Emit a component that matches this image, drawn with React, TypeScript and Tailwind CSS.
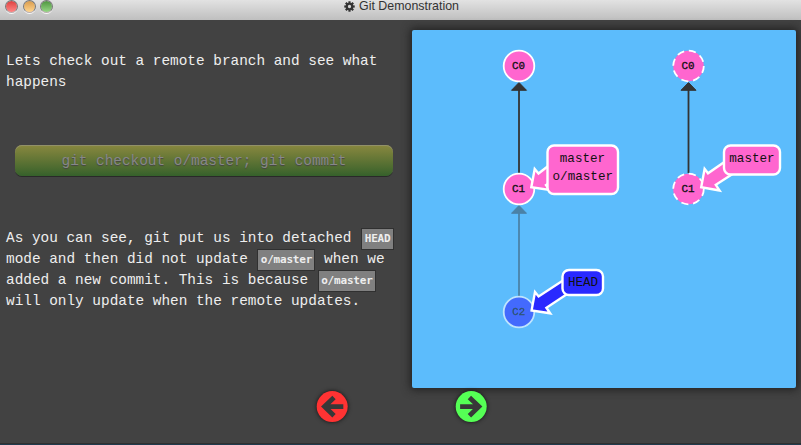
import React from "react";

const MONO = "font-['Liberation_Mono','Courier_New',monospace]";

function Code({ children, className }: { children: React.ReactNode; className: string }) {
  return (
    <code
      className={`inline-flex h-[22px] shrink-0 items-center justify-center border border-[#303030] bg-[#808080] font-['DejaVu_Sans_Mono',monospace] text-[11px] leading-none font-bold tracking-[-0.2px] text-[#eeeeee] ${className}`}
    >
      {children}
    </code>
  );
}

function Gear() {
  const teeth = [0, 45, 90, 135];
  return (
    <svg viewBox="0 0 20 20" className="h-[11px] w-[11px]">
      {teeth.map((a) => (
        <rect key={a} x="8" y="0.5" width="4" height="19" fill="#333333" transform={`rotate(${a} 10 10)`} />
      ))}
      <circle cx="10" cy="10" r="5" fill="#d4d4d4" stroke="#333333" strokeWidth="4" />
    </svg>
  );
}

function TitleBar() {
  const lights = [
    { id: "close", fill: "bg-linear-to-b from-[#dd3f3f] to-[#ff8585]" },
    { id: "minimize", fill: "bg-linear-to-b from-[#d99c4c] to-[#ffd58e]" },
    { id: "zoom", fill: "bg-linear-to-b from-[#4f963f] to-[#96d785]" },
  ];
  return (
    <header className="grid h-5 shrink-0 grid-cols-[1fr_auto_1fr] items-start bg-linear-to-b from-[#e2e2e2] to-[#bfbfbf]">
      <div className="flex gap-[4.5px] pl-[5px]">
        {lights.map((l) => (
          <span
            key={l.id}
            className={`h-[13px] w-[13px] rounded-full border-[1.5px] border-[#777777] border-b-[#bcaeae] bg-clip-padding shadow-[0_1px_0_#f8f8f8] ${l.fill}`}
          />
        ))}
      </div>
      <div className="flex h-[13px] translate-x-px items-center gap-1 font-['Liberation_Sans',Arial,sans-serif] text-[12.4px] leading-[13px] text-[#333333]">
        <Gear />
        <span>Git Demonstration</span>
      </div>
    </header>
  );
}

function Commit({ x, y, label, dashed, head }: { x: number; y: number; label: string; dashed?: boolean; head?: boolean }) {
  return (
    <g opacity={head ? 0.6 : 1}>
      <circle
        cx={x}
        cy={y}
        r="15.3"
        fill={head ? "#3434ff" : "#ff66cf"}
        stroke="#ffffff"
        strokeWidth="1.8"
        strokeDasharray={dashed ? "7.2 4.8" : undefined}
      />
      <text x={x - 0.4} y={y + 3.4} textAnchor="middle" fontSize="10.9" fill="#111111" stroke="#111111" strokeWidth="0.3">
        {label}
      </text>
    </g>
  );
}

function Edge({ x, top, bottom, faded }: { x: number; top: number; bottom: number; faded?: boolean }) {
  return (
    <g opacity={faded ? 0.42 : 1} fill="#333333" stroke="#333333">
      <path d={`M${x} ${top + 8}V${bottom}`} strokeWidth="1.8" />
      <path d={`M${x} ${top + 0.5}L${x + 7.5} ${top + 8.3}H${x - 7.5}Z`} strokeWidth="1" strokeLinejoin="round" />
    </g>
  );
}

function GitTree() {
  return (
    <svg
      width="384"
      height="358"
      viewBox="412 30 384 358"
      role="img"
      aria-label="Commit tree"
      className="block font-['Liberation_Mono','Courier_New',monospace]"
    >
      <Edge x={519} top={82} bottom={173} />
      <Edge x={519} top={205} bottom={296} faded />
      <Edge x={688.5} top={82} bottom={173} />

      <Commit x={519} y={66} label="C0" />
      <Commit x={519} y={189} label="C1" />
      <Commit x={519} y={312} label="C2" head />
      <Commit x={688.5} y={66} label="C0" dashed />
      <Commit x={688.5} y={189} label="C1" dashed />

      <g stroke="#ffffff" strokeWidth="2.4" fill="#ff66cf">
        <path d="M554 161.5L538.5 173.5L534.7 169L531.3 187.3L549.5 190L546 185L560 176Z" />
        <rect x="547.5" y="145.5" width="70.5" height="48.5" rx="6.5" />
        <path d="M728 159.5L708 173.3L704.6 168.8L701.2 187.3L719.6 190.5L715.8 184.8L738 170.5Z" />
        <rect x="724" y="145.5" width="56" height="29" rx="6.5" />
      </g>

      <g stroke="#ffffff" strokeWidth="2.4" fill="#2929ff">
        <path d="M566 278.5L538.6 296.4L535 292L531.6 310.4L550.2 313.3L546.4 307.8L574 289.5Z" />
        <rect x="562.5" y="270" width="40.5" height="25" rx="6.5" />
      </g>

      <g fontSize="12.6" textAnchor="middle" fill="#111111">
        <text x="582.5" y="162">master</text>
        <text x="582.8" y="180">o/master</text>
        <text x="752" y="162">master</text>
        <text x="583" y="286">HEAD</text>
      </g>
    </svg>
  );
}

function NavButton({ back }: { back?: boolean }) {
  return (
    <button aria-label={back ? "Back" : "Next"} className="block h-8 w-8 p-0">
      <svg viewBox="0 0 32 32" className="h-8 w-8 overflow-visible drop-shadow-[0_0_2px_#111111]">
        <circle cx="16.2" cy="15.6" r="15.5" fill={back ? "#ff3333" : "#55ff55"} />
        <path
          d={back ? "M18 6.5L8.5 15.6L18 24.7M9 15.6H27.3" : "M14.4 6.5L23.9 15.6L14.4 24.7M23.4 15.6H5.1"}
          fill="none"
          stroke="#383838"
          strokeWidth="4.8"
          strokeLinejoin="miter"
        />
      </svg>
    </button>
  );
}

export default function App() {
  return (
    <div className="flex h-[445px] w-[801px] flex-col overflow-hidden bg-[#424242]">
      <TitleBar />
      <main className="flex h-[368px] shrink-0">
        <section className={`flex w-[412px] flex-col pl-[6px] text-[14.4px] leading-[21px] text-[#eeeeee] ${MONO}`}>
          <p className="mt-[31px] whitespace-nowrap">
            Lets check out a remote branch and see what
            <br />
            happens
          </p>
          <button className="mt-[52px] ml-[9px] h-[31px] w-[378px] shrink-0 rounded-[7px] bg-linear-to-b from-[#89883f] to-[#35612b] text-center leading-[30px] text-[#888888] shadow-[0_1px_0_#292929,inset_0_1px_0_#929169] [text-shadow:0_1px_1px_#444444]">
            git checkout o/master; git commit
          </button>
          <div className="mt-[52px] whitespace-pre">
            <div className="flex h-[21px] items-center">
              <span>As you can see, git put us into detached </span>
              <Code className="ml-px w-[33px]">HEAD</Code>
            </div>
            <div className="flex h-[21px] items-center">
              <span>mode and then did not update </span>
              <Code className="ml-px w-[58px]">o/master</Code>
              <span> when we</span>
            </div>
            <div className="flex h-[21px] items-center">
              <span>added a new commit. This is because </span>
              <Code className="ml-px w-[58px]">o/master</Code>
            </div>
            <div className="h-[21px]">will only update when the remote updates.</div>
          </div>
        </section>
        <section className="mt-[10px] h-[358px] w-[384px] shrink-0 rounded-[2px] bg-[#5cbcfc] shadow-[0_0_8px_2px_#222222]">
          <GitTree />
        </section>
      </main>
      <nav className="mt-[3px] flex flex-1 gap-[107px] pl-[316px]">
        <NavButton back />
        <NavButton />
      </nav>
      <footer className="h-[2px] shrink-0 border-t border-[#303030] bg-[#203a4d]" />
    </div>
  );
}
